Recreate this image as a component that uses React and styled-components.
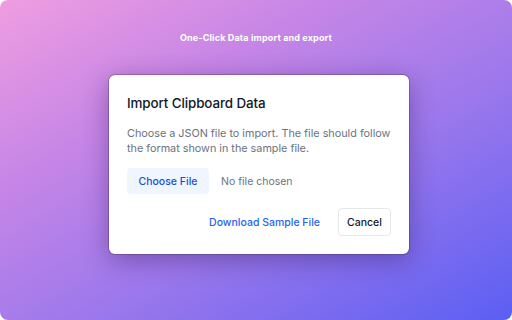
import styled, { createGlobalStyle } from 'styled-components'

const GlobalStyle = createGlobalStyle`
  html, body {
    margin: 0;
    padding: 0;
    background: #ffffff;
  }
  * {
    box-sizing: border-box;
  }
`;

const Stage = styled.div`
  width: 512px;
  height: 320px;
  border-radius: 8px;
  overflow: hidden;
  background: linear-gradient(150deg, #ef9de1 0%, #c786e6 30%, #9c78ec 60%, #5b5ff3 100%);
  display: flex;
  flex-direction: column;
  align-items: center;
  font-family: Inter, "Noto Sans", sans-serif;
`;

const Tagline = styled.p`
  margin: 33px 0 0;
  font-family: Inter, sans-serif;
  font-weight: 700;
  font-size: 9px;
  line-height: 10px;
  color: #ffffff;
  letter-spacing: 0.15px;
`;

const Dialog = styled.div`
  margin-top: 32px;
  margin-left: 6px;
  width: 300px;
  height: 179px;
  background: #ffffff;
  border-radius: 6px;
  padding: 18px 18px 18px;
  box-shadow: 0 0 0 1px rgba(70, 50, 90, 0.35), 0 6px 26px rgba(60, 30, 100, 0.45);
  display: flex;
  flex-direction: column;
`;

const Title = styled.h2`
  margin: 0;
  font-size: 13.4px;
  line-height: 20px;
  font-weight: 500;
  color: #111827;
  letter-spacing: -0.1px;
`;

const Text = styled.p`
  margin: 13px 0 0;
  font-size: 10.8px;
  line-height: 15px;
  color: #6b7280;
`;

const FileRow = styled.div`
  display: flex;
  align-items: center;
  gap: 12px;
  margin-top: 12px;
`;

const FileButton = styled.button`
  height: 26px;
  width: 82px;
  border: none;
  border-radius: 4px;
  background: #eff6ff;
  color: #1d4ed8;
  font-family: inherit;
  font-size: 10.5px;
  font-weight: 500;
  padding: 0;
`;

const FileStatus = styled.span`
  font-size: 10.5px;
  color: #6b7280;
`;

const Actions = styled.div`
  display: flex;
  justify-content: flex-end;
  align-items: center;
  gap: 18px;
  margin-top: auto;
`;

const LinkButton = styled.button`
  border: none;
  background: none;
  padding: 0;
  color: #2563eb;
  font-family: inherit;
  font-size: 10.5px;
  font-weight: 500;
`;

const OutlineButton = styled.button`
  height: 28px;
  width: 53px;
  padding: 0;
  border: 1px solid #e5e7eb;
  border-radius: 4px;
  background: #ffffff;
  color: #111827;
  font-family: inherit;
  font-size: 10.5px;
  font-weight: 500;
`;

const App = () => {
  return (
    <>
      <GlobalStyle />
      <Stage>
        <Tagline>One-Click Data import and export</Tagline>
        <Dialog>
          <Title>Import Clipboard Data</Title>
          <Text>
            Choose a JSON file to import. The file should follow the format shown in the sample file.
          </Text>
          <FileRow>
            <FileButton>Choose File</FileButton>
            <FileStatus>No file chosen</FileStatus>
          </FileRow>
          <Actions>
            <LinkButton>Download Sample File</LinkButton>
            <OutlineButton>Cancel</OutlineButton>
          </Actions>
        </Dialog>
      </Stage>
    </>
  )
}

export default App
